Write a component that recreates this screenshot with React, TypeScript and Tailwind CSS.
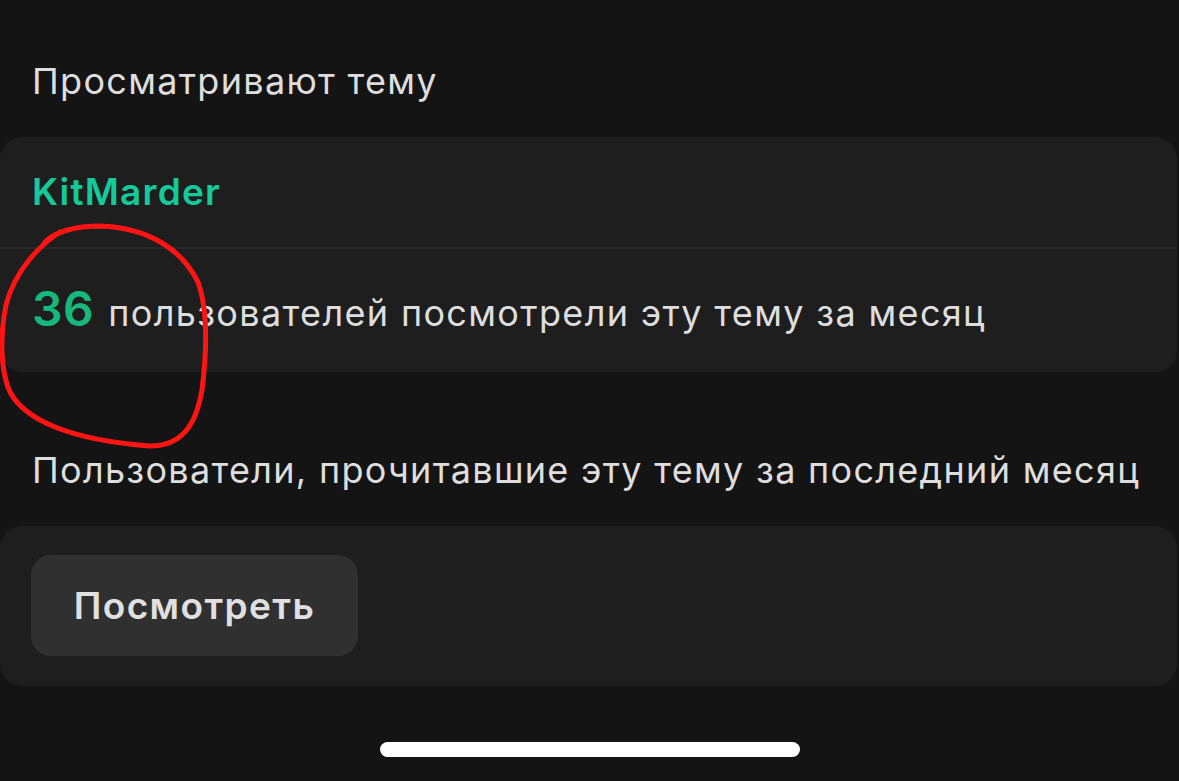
export default function App() {
  const font = { fontFamily: 'Inter, "Noto Sans", sans-serif' };
  return (
    <div className="relative w-full h-[781px] overflow-hidden bg-[#141414] flex flex-col" style={font}>
      <h2 className="pt-[59px] pl-8 text-[36px] leading-[44px] tracking-[1.3px] font-normal text-[#dedede]">
        Просматривают тему
      </h2>

      <div className="mt-[34px] mr-[2px] rounded-[22px] bg-[#1e1e1e] overflow-hidden">
        <div className="h-[110px] flex items-center px-8">
          <span className="text-[37px] leading-[44px] tracking-[1.2px] font-semibold text-[#14c99b]">KitMarder</span>
        </div>
        <div className="h-[2px] bg-[#2a2a2a]" />
        <div className="h-[123px] flex items-center px-8">
          <p className="flex items-baseline gap-[14px] leading-[48px]">
            <span className="text-[48px] tracking-[0.5px] font-semibold text-[#16b97b]">36</span>
            <span className="text-[36px] tracking-[1.35px] text-[#dedede]">пользователей посмотрели эту тему за месяц</span>
          </p>
        </div>
      </div>

      <h2 className="mt-[76px] pl-8 text-[36px] leading-[44px] tracking-[1.3px] font-normal text-[#dedede]">
        Пользователи, прочитавшие эту тему за последний месяц
      </h2>

      <div className="mt-[34px] mr-[2px] rounded-[22px] bg-[#1e1e1e] pt-[29px] pb-[30px] pl-[31px]">
        <button className="w-[327px] h-[101px] rounded-[20px] bg-[#303030] text-[37px] tracking-[1.4px] font-semibold text-[#e0e0e0]">
          Посмотреть
        </button>
      </div>

      <div className="mt-[56px] mx-auto w-[420px] h-[15px] rounded-full bg-white" />

      <svg className="absolute left-0 top-0 pointer-events-none" width="220" height="460" viewBox="0 0 220 460" fill="none">
        <path
          d="M 60 232 C 40 245, 15 270, 6 305 C 0 335, 0 370, 10 392 C 25 420, 70 440, 150 446 C 182 446, 196 425, 202 390 C 207 350, 208 310, 198 282 C 182 250, 150 228, 100 226 C 75 226, 55 232, 45 242"
          stroke="#ff1414"
          strokeWidth="5"
          strokeLinecap="round"
          strokeLinejoin="round"
        />
      </svg>
    </div>
  );
}
